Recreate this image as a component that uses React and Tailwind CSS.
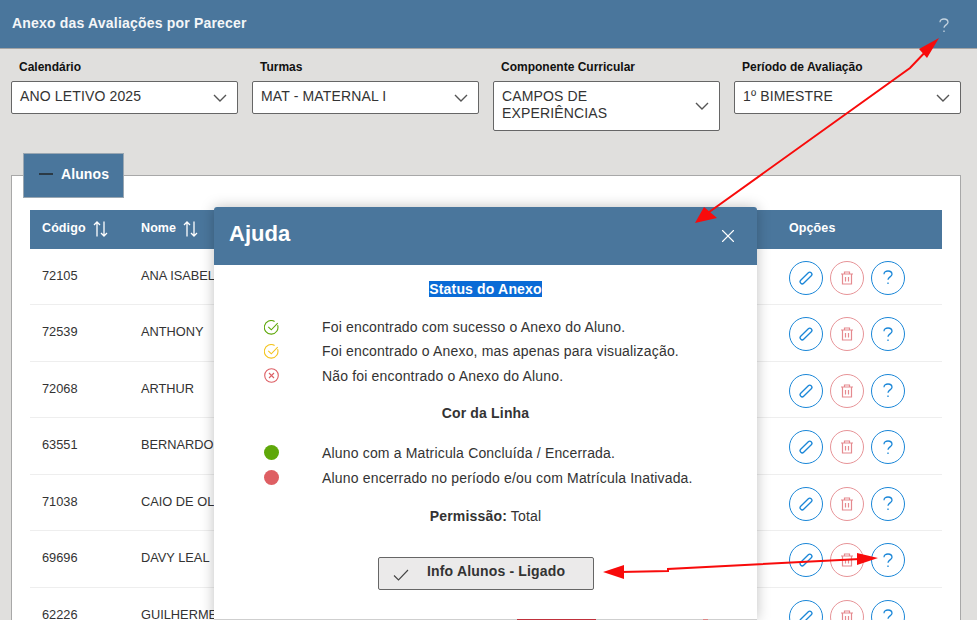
import React from 'react';
import { X } from 'lucide-react';

const selects = [
  { label: 'Calendário', value: 'ANO LETIVO 2025' },
  { label: 'Turmas', value: 'MAT - MATERNAL I' },
  { label: 'Componente Curricular', value: 'CAMPOS DE EXPERIÊNCIAS', tall: true },
  { label: 'Período de Avaliação', value: '1º BIMESTRE' },
];

const alunos = [
  ['72105', 'ANA ISABEL'],
  ['72539', 'ANTHONY'],
  ['72068', 'ARTHUR'],
  ['63551', 'BERNARDO'],
  ['71038', 'CAIO DE OL'],
  ['69696', 'DAVY LEAL'],
  ['62226', 'GUILHERME'],
];

const Chevron = () => (
  <svg width="14" height="8" viewBox="0 0 14 8" fill="none" stroke="#555" strokeWidth="1.4" className="shrink-0">
    <path d="M1 1l6 6 6-6" />
  </svg>
);

const SortIcon = () => (
  <svg width="15" height="16" viewBox="0 0 15 16" fill="none" stroke="white" strokeWidth="1.3" className="ml-[7px] mt-[1px]">
    <path d="M4 15.5V1M1 4l3-3 3 3M11 .5V15M8 12l3 3 3-3" />
  </svg>
);

const Question = ({ color = '#1b87d8', className = '' }) => (
  <svg width="10" height="15" viewBox="0 0 10 15" fill="none" stroke={color} strokeWidth="1.3" className={className}>
    <path d="M1 4.2C1 2.2 2.8 1 5 1s4 1.3 4 3.2c0 2.6-4 2.8-4 5.6" />
    <path d="M5 12.4v1.6" />
  </svg>
);

const RowActions = () => (
  <div className="flex gap-[7px] pt-[3px]">
    <button className="flex h-[34px] w-[34px] items-center justify-center rounded-full border border-[#1b87d8]">
      <svg width="16" height="16" viewBox="0 0 16 16" fill="none" stroke="#1b87d8" strokeWidth="1.3">
        <rect x="5.9" y="0.6" width="4.2" height="14.8" rx="2" transform="rotate(45 8 8)" />
      </svg>
    </button>
    <button className="flex h-[34px] w-[34px] items-center justify-center rounded-full border border-[#e79498]">
      <svg width="14" height="14" viewBox="0 0 14 14" fill="none" stroke="#e58a8f" strokeWidth="1.2">
        <path d="M1 3h12M4.5 3V1h5v2M2.5 3v10h9V3M5.5 6v4.5M8.5 6v4.5" />
      </svg>
    </button>
    <button className="flex h-[34px] w-[34px] items-center justify-center rounded-full border border-[#1b87d8]">
      <Question />
    </button>
  </div>
);

const StatusIcon = ({ color, cross }) => (
  <svg width="15" height="15" viewBox="0 0 15 15" fill="none" stroke={color} strokeWidth="1.1">
    {cross ? (
      <>
        <circle cx="7.5" cy="7.5" r="6.8" />
        <path d="M5 5l5 5M10 5l-5 5" />
      </>
    ) : (
      <>
        <path d="M13.6 5.2A6.8 6.8 0 1 1 10.6 1.5" />
        <path d="M4.3 6.8l3 3 6.4-6.6" />
      </>
    )}
  </svg>
);

const Dot = ({ className }) => <span className={`block h-[15px] w-[15px] rounded-full ${className}`} />;

const LegendRow = ({ icon, children }) => (
  <div className="flex items-center">
    <div className="flex w-[108px] justify-center pl-[6px]">{icon}</div>
    <span>{children}</span>
  </div>
);

function HelpModal() {
  return (
    <div className="absolute left-[214px] top-[207px] h-[413px] w-[543px] rounded-t-[3px] border-b border-[#cfcfcf] bg-white text-[14px] tracking-[0.17px] text-[#333] shadow-[0_0_14px_rgba(0,0,0,0.25)]">
      <div className="flex h-[58px] items-center justify-between rounded-t-[3px] bg-[#4a769c] pb-[6px] pl-[15px] pr-[18px]">
        <h2 className="text-[22px] font-bold tracking-normal text-white">Ajuda</h2>
        <X className="mt-[5px] h-[22px] w-[22px] text-white" strokeWidth={1.2} />
      </div>
      <div className="flex flex-col pt-[16px]">
        <div className="text-center leading-[17px]">
          <span className="bg-[#0a6bd6] font-bold text-white">Status do Anexo</span>
        </div>
        <div className="mt-[21px] flex flex-col gap-[8.4px] leading-[16px]">
          <LegendRow icon={<StatusIcon color="#5fa80a" />}>Foi encontrado com sucesso o Anexo do Aluno.</LegendRow>
          <LegendRow icon={<StatusIcon color="#f4c41f" />}>Foi encontrado o Anexo, mas apenas para visualização.</LegendRow>
          <LegendRow icon={<StatusIcon color="#dd5f65" cross />}>Não foi encontrado o Anexo do Aluno.</LegendRow>
        </div>
        <div className="mt-[21px] text-center font-bold leading-[17px]">Cor da Linha</div>
        <div className="mt-[23px] flex flex-col gap-[9px] leading-[16px]">
          <LegendRow icon={<Dot className="bg-[#5fa80a]" />}>Aluno com a Matricula Concluída / Encerrada.</LegendRow>
          <LegendRow icon={<Dot className="bg-[#de5f63]" />}>Aluno encerrado no período e/ou com Matrícula Inativada.</LegendRow>
        </div>
        <div className="mt-[22px] text-center leading-[17px]">
          <b>Permissão:</b> Total
        </div>
        <button className="relative ml-[164px] mt-[32px] flex h-[33px] w-[216px] items-center rounded-[2px] border border-[#666] bg-[#ebeaea] pb-[3px] pl-[14px] font-bold text-[#333]">
          <svg width="16" height="12" viewBox="0 0 16 12" fill="none" stroke="#444" strokeWidth="1.1" className="mt-[6px]">
            <path d="M1 6.5l4.5 4.5L15 1" />
          </svg>
          <span className="ml-[18px]">Info Alunos - Ligado</span>
        </button>
      </div>
      {/* top edge of the footer buttons, the modal is cut by the window */}
      <span className="absolute bottom-[-1px] left-[303px] h-[1px] w-[79px] bg-[#c0313c]" />
      <span className="absolute bottom-[-1px] left-[489px] h-[1px] w-[5px] bg-[#dd8888]" />
    </div>
  );
}

function Arrows() {
  return (
    <svg width="977" height="620" viewBox="0 0 977 620" className="pointer-events-none absolute left-0 top-0" fill="none">
      <path d="M705 215L910 68 931 46" stroke="#f80b0b" strokeWidth="2" />
      <path d="M695 223L717 218 704 207Z M939 38L919 49 927 58Z" fill="#f80b0b" />
      <path d="M620 572L668 571 668 569 860 559" stroke="#f80b0b" strokeWidth="2" />
      <path d="M603 572L624 565 624 579Z M878 558L857 553 857 565Z" fill="#f80b0b" />
    </svg>
  );
}

export default function App() {
  return (
    <div className="relative h-[620px] w-[977px] overflow-hidden bg-[#e0dfdd] font-['Liberation_Sans',Arial,sans-serif]">
      <header className="flex h-[49px] items-start justify-between border-b border-[#a4a4a4] bg-[#4a769c] pl-[12px] pr-[28px] pt-[15px]">
        <h1 className="text-[14px] font-bold leading-[16px] tracking-[0.19px] text-[#f4f6f8]">Anexo das Avaliações por Parecer</h1>
        <Question color="#c5d4e0" className="mt-[3px]" />
      </header>

      <div className="grid grid-cols-[227px_227px_227px_227px] items-start gap-x-[14px] pl-[11px] pt-[10px]">
        {selects.map((s) => (
          <div key={s.label}>
            <label className="block pb-[7px] pl-[8px] pt-[1px] text-[12px] font-bold leading-[14px] text-[#111]">{s.label}</label>
            <div className={`flex w-[227px] items-center justify-between rounded-[2px] border border-[#666] bg-white pl-[8px] pr-[10px] text-[14px] leading-[17px] tracking-[0.14px] text-[#333] ${s.tall ? 'h-[50px]' : 'h-[33px]'}`}>
              <span className="mb-[2px] w-[170px]">{s.value}</span>
              <Chevron />
            </div>
          </div>
        ))}
      </div>

      <section className="ml-[11px] mt-[44px] w-[950px] border border-[#a8a8a8] bg-white pb-4">
        <div className="ml-[11px] mt-[-23px] flex h-[45px] w-[101px] items-center border border-[#9aa7b2] bg-[#4a769c] pb-[3px] pl-[15px] text-[14px] font-bold tracking-[0.1px] text-white">
          <span className="mr-[8px] block h-[1.5px] w-[14px] bg-[#2b3a46]" />
          Alunos
        </div>
        <div className="mx-[18px] mt-[12px]">
          <div className="grid h-[38.5px] grid-cols-[111px_648px_153px] items-center bg-[#4a769c] pb-[2px] text-[12.5px] font-bold tracking-[0.1px] text-white">
            <div className="flex items-center pl-[12px]">Código <SortIcon /></div>
            <div className="flex items-center">Nome <SortIcon /></div>
            <div>Opções</div>
          </div>
          {alunos.map(([codigo, nome]) => (
            <div key={codigo} className="grid h-[56.5px] grid-cols-[111px_648px_153px] items-center border-b border-[#eeeeee] text-[12.8px] text-[#333]">
              <div className="pb-[2px] pl-[12px]">{codigo}</div>
              <div className="pb-[2px]">{nome}</div>
              <RowActions />
            </div>
          ))}
        </div>
      </section>

      <HelpModal />
      <Arrows />
    </div>
  );
}
